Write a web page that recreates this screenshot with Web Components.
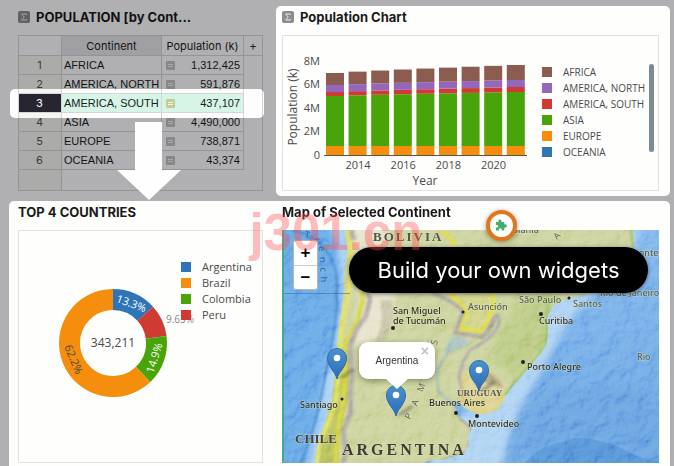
<!DOCTYPE html>
<html lang="en">
  <head>
    <meta charset="utf-8">
    <title>Population dashboard</title>
    <style>
      body { margin: 0; font-family: Inter, "Liberation Sans", sans-serif; }
    </style>
  </head>
  <body>
    <template id="dash-board-template">
      <style>
        :host {
          display: grid;
          grid-template-columns: minmax(0, 267fr) minmax(0, 394fr);
          grid-template-rows: auto 1fr;
          row-gap: 5px;
          box-sizing: border-box;
          min-height: 100vh;
          padding: 6px 4px 0 9px;
          position: relative;
          overflow: hidden;
          background: #fdfdfe;
        }
        .lit { position: relative; z-index: 1; background: #fefefd; border-radius: 5px; }
        .bottom {
          grid-column: 1 / -1;
          display: grid;
          grid-template-columns: subgrid;
          border-radius: 5px 5px 0 0;
          padding-bottom: 3px;
        }
      </style>
      <slot name="table"></slot>
      <div class="lit"><slot name="chart"></slot></div>
      <div class="lit bottom"><slot name="bottom"></slot></div>
      <slot></slot>
    </template>

    <template id="widget-card-template">
      <style>
        :host {
          display: flex;
          flex-direction: column;
          box-sizing: border-box;
          padding: 0 11px 5px 6px;
          position: relative;
        }
        :host([side="left"]) { padding: 0 13px 5px 9px; }
        :host([flush]) { padding-bottom: 0; }
        header { display: flex; align-items: center; gap: 6px; height: 22px; margin-bottom: 7px; }
        h2 { margin: 0; font-size: 13px; font-weight: 700; line-height: 22px; color: #1a1a1a; white-space: nowrap; }
        svg { display: none; width: 12px; height: 12px; flex: none; }
        :host([summary]) svg { display: block; }
        .body {
          flex: 1;
          display: grid;
          box-sizing: border-box;
          min-height: 156px;
          border: 1px solid #e2e2e2;
        }
        :host([plain]) .body { border: 0; }
      </style>
      <header>
        <svg viewBox="0 0 12 12"><rect width="12" height="12" rx="2" fill="#8b8b92"/><path d="M8.4 4V3H3.6L6.2 6 3.6 9H8.4V8" fill="none" stroke="#e8e8ea"/></svg>
        <h2><slot name="title"></slot></h2>
      </header>
      <div class="body"><slot></slot></div>
      <slot name="over"></slot>
    </template>

    <template id="data-table-template">
      <style>
        :host { display: block; }
        table {
          width: 100%;
          height: 156px;
          box-sizing: border-box;
          table-layout: fixed;
          border-collapse: separate;
          border-spacing: 0;
          border: 1px solid #d5d5d5;
          font: 11px/18px "Liberation Sans", Arial, sans-serif;
          color: #1c1c1c;
        }
        .n { width: 43px; }
        .v { width: 82px; }
        .p { width: 18px; }
        th, td {
          box-sizing: border-box;
          height: 19px;
          padding: 0 3px 0 2px;
          border-right: 1px solid #d5d5d5;
          border-bottom: 1px solid #d5d5d5;
          font-weight: normal;
          white-space: nowrap;
        }
        thead th { height: 20px; padding: 0; font-family: Inter, sans-serif; text-align: center; }
        thead th.name { background: #e6e6ea; }
        tbody th { background: #f5f5f1; text-align: center; color: #555; font-family: Inter, sans-serif; }
        td.num { text-align: right; }
        td.num svg { float: left; width: 9px; height: 9px; margin: 5px 0 0 2px; }
        th.add { border-right: 0; }
        td.add { padding: 0; border: 0; }
        tfoot td { height: 20px; border: 0; }
        tfoot td:first-child { background: #f5f5f1; border-right: 1px solid #d5d5d5; }
        button { display: block; width: 100%; padding: 0; border: 0; background: none; font: 12px/18px Inter, sans-serif; color: #333; }
        svg { color: #c2c2c4; }
        tr.on { position: relative; }
        tr.on th { background: #262530; color: #fff; }
        tr.on td:not(.add) { background: #d6f5e6; }
        tr.on svg { color: #c5cc8e; }
        /* spotlight: everything outside the row gets the dim */
        tr.on .add::after {
          content: "";
          position: absolute;
          inset: -5px -2px -5px -9px;
          border-radius: 5px;
          box-shadow: 0 0 0 2000px rgba(0, 0, 4, .3);
          pointer-events: none;
        }
      </style>
      <table>
        <colgroup><col class="n"><col><col class="v"><col class="p"></colgroup>
        <thead>
          <tr><th></th><th class="name" scope="col">Continent</th><th scope="col">Population (k)</th><th class="add"><button type="button" aria-label="Add column">+</button></th></tr>
        </thead>
        <tbody></tbody>
        <tfoot><tr><td></td><td></td><td></td><td></td></tr></tfoot>
      </table>
    </template>

    <template id="chart-legend-template">
      <style>
        :host { display: block; font: 11px/16px "Open Sans", sans-serif; color: #4a4a4a; }
        ul { margin: 0; padding: 0; list-style: none; display: grid; grid-auto-rows: 16px; }
        li { display: flex; align-items: center; gap: 11px; white-space: nowrap; }
        i { width: 10px; height: 10px; flex: none; }
      </style>
      <ul></ul>
    </template>

    <template id="stack-chart-template">
      <style>
        :host { display: grid; grid-template-columns: minmax(0, 248fr) minmax(0, 127fr); align-items: start; }
        svg { width: 100%; display: block; font-family: "Open Sans", sans-serif; }
        .side { display: flex; justify-content: space-between; padding: 28px 4px 0 11px; }
        .bar { width: 5px; height: 88px; border-radius: 3px; background: #7e8a94; flex: none; }
        text { font-size: 11px; fill: #4a4a4a; }
        .axis { font-size: 12px; }
        chart-legend { font-size: 10px; min-width: 0; }
      </style>
      <svg viewBox="0 0 248 154"></svg>
      <div class="side"><chart-legend></chart-legend><div class="bar"></div></div>
    </template>

    <template id="donut-chart-template">
      <style>
        :host { display: grid; grid-template-columns: minmax(0, 162fr) minmax(0, 81fr); align-items: start; }
        svg { display: block; width: 100%; overflow: visible; font-family: "Open Sans", sans-serif; }
        chart-legend { margin-top: 28px; }
        text { font-size: 11px; fill: #4a4a4a; text-anchor: middle; }
        .in { fill: #fff; }
        .total { font-size: 12px; }
        .out { font-size: 10px; fill: #888; }
      </style>
      <svg viewBox="0 0 162 231"></svg>
      <chart-legend></chart-legend>
    </template>

    <template id="zoom-control-template">
      <style>
        :host { display: grid; width: 25px; background: #fff; border: 1px solid #b4b8ba; border-radius: 3px; box-sizing: border-box; }
        button { height: 24px; padding: 0; border: 0; background: none; font: bold 17px/24px "Liberation Sans", sans-serif; color: #000; }
        button + button { border-top: 1px solid #ccc; }
      </style>
      <button type="button" aria-label="Zoom in">+</button>
      <button type="button" aria-label="Zoom out">−</button>
    </template>

    <template id="map-popup-template">
      <style>
        :host {
          display: block;
          box-sizing: border-box;
          width: 76px;
          padding: 10px 0;
          border-radius: 9px;
          background: #fff;
          box-shadow: 0 2px 6px rgba(0, 0, 0, .35);
          font: 10px/17px "Liberation Sans", sans-serif;
          text-align: center;
          color: #333;
        }
        :host::after {
          content: "";
          position: absolute;
          left: 50%;
          top: 100%;
          margin-left: -11px;
          border: 11px solid transparent;
          border-top: 10px solid #fff;
          border-bottom: 0;
        }
        button { position: absolute; top: 1px; right: 6px; padding: 0; border: 0; background: none; font: bold 14px/16px "Liberation Sans", sans-serif; color: #c3c3c3; }
      </style>
      <slot></slot>
      <button type="button" aria-label="Close">×</button>
    </template>

    <template id="relief-map-template">
      <style>
        :host { display: block; position: relative; border-left: 2px solid #45ab86; overflow: hidden; }
        .art { position: absolute; inset: 0; width: 100%; height: 100%; }
        zoom-control { position: absolute; left: 9px; top: 10px; }
        map-popup { position: absolute; left: 75px; top: 112px; }
        .art text { font: 500 9px "Noto Sans", sans-serif; fill: #2c2e28; paint-order: stroke; stroke: rgba(235, 238, 200, .5); stroke-width: 1px; }
        .art .country { font: bold 13px "Liberation Serif", serif; letter-spacing: 2px; fill: #55544a; }
        .art .wide { font-size: 16px; fill: #3d3c31; letter-spacing: 3px; }
        .art .chile { letter-spacing: 0; fill: #45443a; }
        .art .uruguay { font-size: 9px; letter-spacing: 0; }
        .art .soft { fill: #55605a; }
        .art .relief { font: 9px "Noto Sans", sans-serif; letter-spacing: 10px; fill: #5c6350; }
        .art .sea { fill: #3a5a80; stroke: none; letter-spacing: 5px; }
      </style>
      <svg class="art" viewBox="284 230 375 233" preserveAspectRatio="xMidYMid slice">
        <defs>
          <linearGradient id="east" x1="0" y1="0" x2=".35" y2="1">
            <stop offset="0" stop-color="#8abdf0"/><stop offset=".6" stop-color="#73ace9"/><stop offset="1" stop-color="#6aa3e2"/>
          </linearGradient>
          <linearGradient id="pin" x1="0" y1="0" x2="0" y2="1">
            <stop offset="0" stop-color="#4a92d2"/><stop offset="1" stop-color="#2a6cb4"/>
          </linearGradient>
          <filter id="relief" x="0" y="0" width="100%" height="100%">
            <feTurbulence type="fractalNoise" baseFrequency=".07" numOctaves="4" seed="8"/>
            <feDiffuseLighting surfaceScale="6" diffuseConstant=".68" lighting-color="#fff"><feDistantLight azimuth="225" elevation="50"/></feDiffuseLighting>
          </filter>
          <filter id="soft"><feGaussianBlur stdDeviation="3"/></filter>
          <filter id="edge"><feGaussianBlur stdDeviation="1"/></filter>
          <path id="land" d="M344 225L347 250 344 275 343 300 339 325 337 350 335 375 332 400 326 420 320 438 316 452 314 470H418C425 458 433 461 446 459L464 453 469 444 468 436 472 429 466 421 458 416 456 409 450 402 458 403 466 409 478 414 490 413 500 407 505 397 512 387 521 377 530 366 541 353 547 343 548 330 547 318 553 306 566 299 580 296 600 290 625 270 634 248 633 225Z"/>
          <clipPath id="inland"><use href="#land"/></clipPath>
          <g id="marker">
            <path d="M0 0L14-11 18-9 8-1Z" fill="#333" opacity=".3" filter="url(#edge)"/>
            <path d="M0 0C-2-8-9.500-12-9.500-21A9.500 9.500 0 0 1 9.500-21C9.500-12 2-8 0 0Z" fill="url(#pin)" stroke="#2d6aa8"/>
            <circle cy="-21" r="3.300" fill="#fff"/>
          </g>
        </defs>

        <rect x="280" y="225" width="385" height="245" fill="url(#east)"/>
        <path d="M280 225H350V470H280Z" fill="#65a5e6"/>
        <path d="M330 225C340 250 342 280 340 310L332 350 324 380 318 420 306 470H350V225Z" fill="#a6cff4" filter="url(#soft)"/>
        <path d="M292 230C312 234 331 248 336 272 339 300 335 335 327 365 322 395 318 420 300 465" fill="none" stroke="#2f6fc0" stroke-width="2" opacity=".7" filter="url(#edge)"/>
        <path d="M640 225C636 262 610 285 575 312 552 345 540 375 525 398 510 425 508 445 500 470H430V440L480 400 560 290Z" fill="#acd2f3" filter="url(#soft)"/>
        <path d="M540 395C565 380 600 390 620 385S645 398 664 400V466C640 460 620 444 600 440S550 440 530 455C520 445 522 410 540 395Z" fill="#659edf" opacity=".6" filter="url(#soft)"/>
        <path d="M520 470C530 452 548 444 566 441 580 434 594 440 608 443 622 446 632 456 650 460L664 463V470Z" fill="#5590d6"/>

        <use href="#land" fill="#cad199"/>
        <g clip-path="url(#inland)">
          <path d="M520 300L550 290 560 300 546 345 520 380 490 360 500 330Z" fill="#b9ca80" filter="url(#soft)"/>
          <path d="M350 225L385 225 396 290 392 325 370 345 352 345 360 300Z" fill="#e6e2cb" filter="url(#soft)"/>
          <path d="M335 345L350 350 348 400 340 430 338 470H312L322 430 332 400Z" fill="#b9c05c"/>
          <path d="M349 225L352 262 349 290 344 315 340 340 339 370 337 392 333 410 327 425 319 442 316 470" fill="none" stroke="#dfe064" stroke-width="5" filter="url(#edge)"/>
          <path d="M361 270L363 300 357 322 347 340 344 352 345 380 343 405 338 430 335 470" fill="none" stroke="#d3d640" stroke-width="5" opacity=".9" filter="url(#edge)"/>
          <path d="M350 225L354 240M364 285L370 300 366 316 356 330 350 346 352 372 350 398 351 412 343 432 346 450 342 470" fill="none" stroke="#aaa2a0" stroke-width="5" opacity=".85" filter="url(#edge)"/>
          <path d="M380 300Q385 320 375 345L386 340Q396 320 392 300Z" fill="#b8b596" opacity=".6" filter="url(#edge)"/>
          <path d="M440 228C460 250 462 255 478 262" fill="none" stroke="#dcd94a" stroke-width="4" filter="url(#edge)"/>
          <path d="M444 288L464 312 456 332 482 335 497 314 494 288Z" fill="#d0d284"/>
          <path d="M450 294C456 300 464 306 467 314L459 328 481 331C490 324 488 316 493 308V294" fill="none" stroke="#e4de35" stroke-width="3" filter="url(#edge)"/>
          <path d="M432 293C448 299 458 305 463 312L455 333 483 337C494 328 490 320 498 315" fill="none" stroke="#aaa598" stroke-width="4" filter="url(#edge)"/>
          <path d="M481 337C492 332 490 320 498 315 503 328 490 340 470 350L463 362 459 376 464 398" fill="none" stroke="#aaa6a2" stroke-width="3" filter="url(#edge)"/>
          <path d="M452 336C462 336 472 338 466 346L452 352 444 350Z" fill="#a9c3bf" filter="url(#edge)"/>
          <path d="M450 350C444 358 436 366 437 384 436 392 446 400 456 404" fill="none" stroke="#9cbab8" stroke-width="3" opacity=".8" filter="url(#edge)"/>
          <path d="M464 374C474 364 486 365 492 374L503 384 505 397 498 410 478 414 464 405Z" fill="#dbd28f"/>
          <path d="M474 376C484 366 500 376 503 388L488 384Z" fill="#a89c74" opacity=".8" filter="url(#edge)"/>
          <path d="M464 374L463 400 478 413 498 409 505 395" fill="none" stroke="#e2cb62" stroke-width="2" filter="url(#edge)"/>
          <path d="M548 300L547 345 532 364 514 384 506 395M630 225L634 248 622 272" fill="none" stroke="#9cc06a" stroke-width="4" filter="url(#edge)"/>
          <path d="M456 408L460 418 472 429 468 452 440 461" fill="none" stroke="#a6a397" stroke-width="3" filter="url(#edge)"/>
        </g>
        <rect x="280" y="225" width="385" height="245" filter="url(#relief)" opacity=".22" style="mix-blend-mode: overlay"/>
        <path d="M280 293.500H350" stroke="#44689a" opacity=".6"/>

        <text class="country" x="373" y="241">BOLIVIA</text>
        <text class="country chile" x="295" y="443">CHILE</text>
        <text class="country wide" x="342" y="455">ARGENTINA</text>
        <text class="country uruguay" x="457" y="396">URUGUAY</text>
        <text x="393" y="314">San Miguel</text>
        <text x="393" y="324">de Tucumán</text>
        <text x="300" y="408">Santiago</text>
        <text x="429" y="406">Buenos Aires</text>
        <text x="468" y="427">Montevideo</text>
        <text x="527" y="370">Porto Alegre</text>
        <text x="539" y="324">Curitiba</text>
        <text class="soft" x="468" y="310">Asunción</text>
        <text class="soft" x="519" y="303">São Paulo</text>
        <text class="soft" x="573" y="307">Santos</text>
        <text class="soft" x="600" y="296">Rio de Janeiro</text>
        <text class="soft" x="616" y="256">Horizonte</text>
        <text class="soft" x="637" y="360">Rio</text>
        <text class="soft" x="506" y="233">Goiânia</text>
        <g fill="#222">
          <circle cx="393" cy="328" r="2"/><circle cx="342" cy="399" r="1.500"/><circle cx="456" cy="413" r="2"/>
          <circle cx="477" cy="416" r="2"/><circle cx="523" cy="362" r="2"/><circle cx="541" cy="314" r="2"/>
          <circle cx="463" cy="312" r="1.500"/><circle cx="569" cy="298" r="1.500"/>
        </g>
        <path id="pampas" d="M410 420Q432 378 441 325" fill="none"/>
        <text class="relief"><textPath href="#pampas">PAMPAS</textPath></text>
        <path id="trench" d="M304 238Q320 236 320 262L322 300" fill="none"/>
        <text class="relief sea"><textPath href="#trench">Trench</textPath></text>
        <text class="relief" transform="translate(557 240) rotate(-45)">A</text>

        <use href="#marker" x="337" y="379"/>
        <use href="#marker" x="479" y="391"/>
        <use href="#marker" x="396" y="416"/>
      </svg>
      <zoom-control></zoom-control>
      <map-popup>Argentina</map-popup>
    </template>

    <template id="callout-pill-template">
      <style>
        :host {
          position: absolute;
          z-index: 2;
          left: 73px;
          right: 22px;
          top: 46px;
          height: 46px;
          border-radius: 23px;
          background: #000;
          box-shadow: 0 1px 4px rgba(0, 0, 0, .5);
          color: #fff;
          font: 22px/47px Inter, sans-serif;
          text-align: center;
          white-space: nowrap;
        }
        .badge {
          position: absolute;
          left: 50%;
          top: -37px;
          margin-left: -13px;
          width: 23px;
          height: 23px;
          border: 4px solid #e2761c;
          border-radius: 50%;
          background: #fff;
          box-shadow: 0 1px 5px rgba(0, 0, 0, .4);
        }
        svg { display: block; width: 12px; height: 12px; margin: 5px; }
      </style>
      <span class="badge"><svg viewBox="0 0 12 12"><path d="M1 3H3.600C2.800 1.200 3.800.400 4.900.400S7 1.200 6.300 3H9.300V5.600C11 4.900 11.800 5.900 11.800 7S11 9.100 9.300 8.500V11.600H6.600C7.200 10 6.300 9.300 5.300 9.300S3.400 10 4 11.600H1V8.400C2.600 9 3.200 8.100 3.200 7.200S2.600 5.500 1 6.100Z" fill="#42b06c"/></svg></span>
      <slot></slot>
    </template>

    <template id="down-arrow-template">
      <style>
        :host { position: absolute; z-index: 2; left: 108px; top: 116px; width: 64px; height: 78px; }
        svg { display: block; }
      </style>
      <svg width="64" height="78"><path d="M18 0H45V48H64L32 78 0 48H18Z" fill="#fefefe"/></svg>
    </template>

    <template id="water-mark-template">
      <style>
        :host {
          position: absolute;
          z-index: 3;
          left: 37%;
          top: 204px;
          font: bold 51px/58px "Liberation Sans", sans-serif;
          color: rgba(255, 72, 72, .36);
          pointer-events: none;
        }
      </style>
      <slot></slot>
    </template>

    <dash-board>
      <widget-card slot="table" side="left" summary plain>
        <span slot="title">POPULATION [by Cont...</span>
        <data-table></data-table>
        <down-arrow slot="over"></down-arrow>
      </widget-card>
      <widget-card slot="chart" summary>
        <span slot="title">Population Chart</span>
        <stack-chart></stack-chart>
      </widget-card>
      <widget-card slot="bottom" side="left" flush>
        <span slot="title">TOP 4 COUNTRIES</span>
        <donut-chart></donut-chart>
      </widget-card>
      <widget-card slot="bottom" flush plain>
        <span slot="title">Map of Selected Continent</span>
        <relief-map></relief-map>
        <callout-pill slot="over">Build your own widgets</callout-pill>
      </widget-card>
      <water-mark>j301.cn</water-mark>
    </dash-board>

    <script>
    const BLUE = '#2e75b8', ORANGE = '#f48e0c', GREEN = '#48a408', RED = '#cf3b33', PURPLE = '#9467bd', BROWN = '#8b5c4f';

    // attaches an open shadow root filled from #<tag>-template
    class TemplateElement extends HTMLElement {
      constructor() {
        super();
        const template = document.getElementById(this.localName + '-template');
        this.attachShadow({mode: 'open'}).appendChild(template.content.cloneNode(true));
      }
    }

    class DataTable extends TemplateElement {
      constructor() {
        super();
        const rows = [
          ['AFRICA', '1,312,425'],
          ['AMERICA, NORTH', '591,876'],
          ['AMERICA, SOUTH', '437,107'],
          ['ASIA', '4,490,000'],
          ['EUROPE', '738,871'],
          ['OCEANIA', '43,374']
        ];
        const icon = '<svg viewBox="0 0 9 9"><rect width="9" height="9" rx="1" fill="currentColor"/><path d="M2 3.500H7M2 5.500H7" stroke="#f4f4f4"/></svg>';
        this.shadowRoot.querySelector('tbody').innerHTML = rows.map(([name, value], i) =>
          `<tr class="${i === 2 ? 'on' : ''}"><th scope="row">${i + 1}</th><td>${name}</td><td class="num">${icon}${value}</td><td class="add"></td></tr>`
        ).join('');
      }
    }

    class ChartLegend extends TemplateElement {
      set items(list) {
        this.shadowRoot.querySelector('ul').innerHTML = list.map(([name, color]) =>
          `<li><i style="background: ${color}"></i>${name}</li>`).join('');
      }
    }

    class StackChart extends TemplateElement {
      constructor() {
        super();
        // upper edge of each layer, first and last year
        const layers = [
          [ORANGE, 110, 110],
          [GREEN, 60, 56],
          [RED, 56, 51],
          [PURPLE, 49, 44],
          [BROWN, 37, 29]
        ];
        let out = '';
        for (let i = 0; i < 9; i++) {
          let base = 119;
          const x = 43 + i * 22.6;
          for (const [color, first, last] of layers) {
            const top = first + (last - first) * Math.pow(i / 8, .85);
            out += `<rect x="${x}" y="${top}" width="18" height="${base - top}" fill="${color}"/>`;
            base = top;
          }
        }
        out += '<path d="M41 119.500H244" stroke="#555"/>';
        ['0', '2M', '4M', '6M', '8M'].forEach((t, i) => {
          out += `<text x="37" y="${123 - i * 23.6}" text-anchor="end">${t}</text>`;
        });
        ['2014', '2016', '2018', '2020'].forEach((t, i) => {
          out += `<text x="${75 + i * 45.2}" y="133" text-anchor="middle">${t}</text>`;
        });
        out += '<text class="axis" x="142" y="149" text-anchor="middle">Year</text>';
        out += '<text class="axis" transform="translate(14 71) rotate(-90)" text-anchor="middle">Population (k)</text>';
        this.shadowRoot.querySelector('svg').innerHTML = out;
      }
      connectedCallback() {
        this.shadowRoot.querySelector('chart-legend').items = [
          ['AFRICA', BROWN], ['AMERICA, NORTH', PURPLE], ['AMERICA, SOUTH', RED],
          ['ASIA', GREEN], ['EUROPE', ORANGE], ['OCEANIA', BLUE]
        ];
      }
    }

    class DonutChart extends TemplateElement {
      constructor() {
        super();
        const cx = 94, cy = 112, R = 54, r = 33;
        const slices = [[13.3, BLUE], [9.63, RED], [14.9, GREEN], [62.17, ORANGE]];
        const at = (radius, share) => {
          const a = share / 100 * 2 * Math.PI;
          return `${cx + radius * Math.sin(a)} ${cy - radius * Math.cos(a)}`;
        };
        let start = 0, out = '';
        for (const [share, color] of slices) {
          const end = start + share, large = share > 50 ? 1 : 0;
          out += `<path d="M${at(R, start)}A${R} ${R} 0 ${large} 1 ${at(R, end)}L${at(r, end)}A${r} ${r} 0 ${large} 0 ${at(r, start)}Z" fill="${color}"/>`;
          start = end;
        }
        out += `<text class="total" x="${cx}" y="${cy + 4}">343,211</text>
          <text class="in" transform="translate(111 76) rotate(20)">13.3%</text>
          <text class="in" transform="translate(139 128) rotate(-72)">14.9%</text>
          <text transform="translate(51 130) rotate(67)">62.2%</text>
          <text class="out" x="161" y="92">9.63%</text>`;
        this.shadowRoot.querySelector('svg').innerHTML = out;
      }
      connectedCallback() {
        this.shadowRoot.querySelector('chart-legend').items = [
          ['Argentina', BLUE], ['Brazil', ORANGE], ['Colombia', GREEN], ['Peru', RED]
        ];
      }
    }

    customElements.define('chart-legend', ChartLegend);
    customElements.define('data-table', DataTable);
    customElements.define('stack-chart', StackChart);
    customElements.define('donut-chart', DonutChart);
    for (const tag of ['zoom-control', 'map-popup', 'relief-map', 'callout-pill', 'down-arrow', 'water-mark', 'widget-card', 'dash-board']) {
      customElements.define(tag, class extends TemplateElement {});
    }
    </script>
  </body>
</html>
